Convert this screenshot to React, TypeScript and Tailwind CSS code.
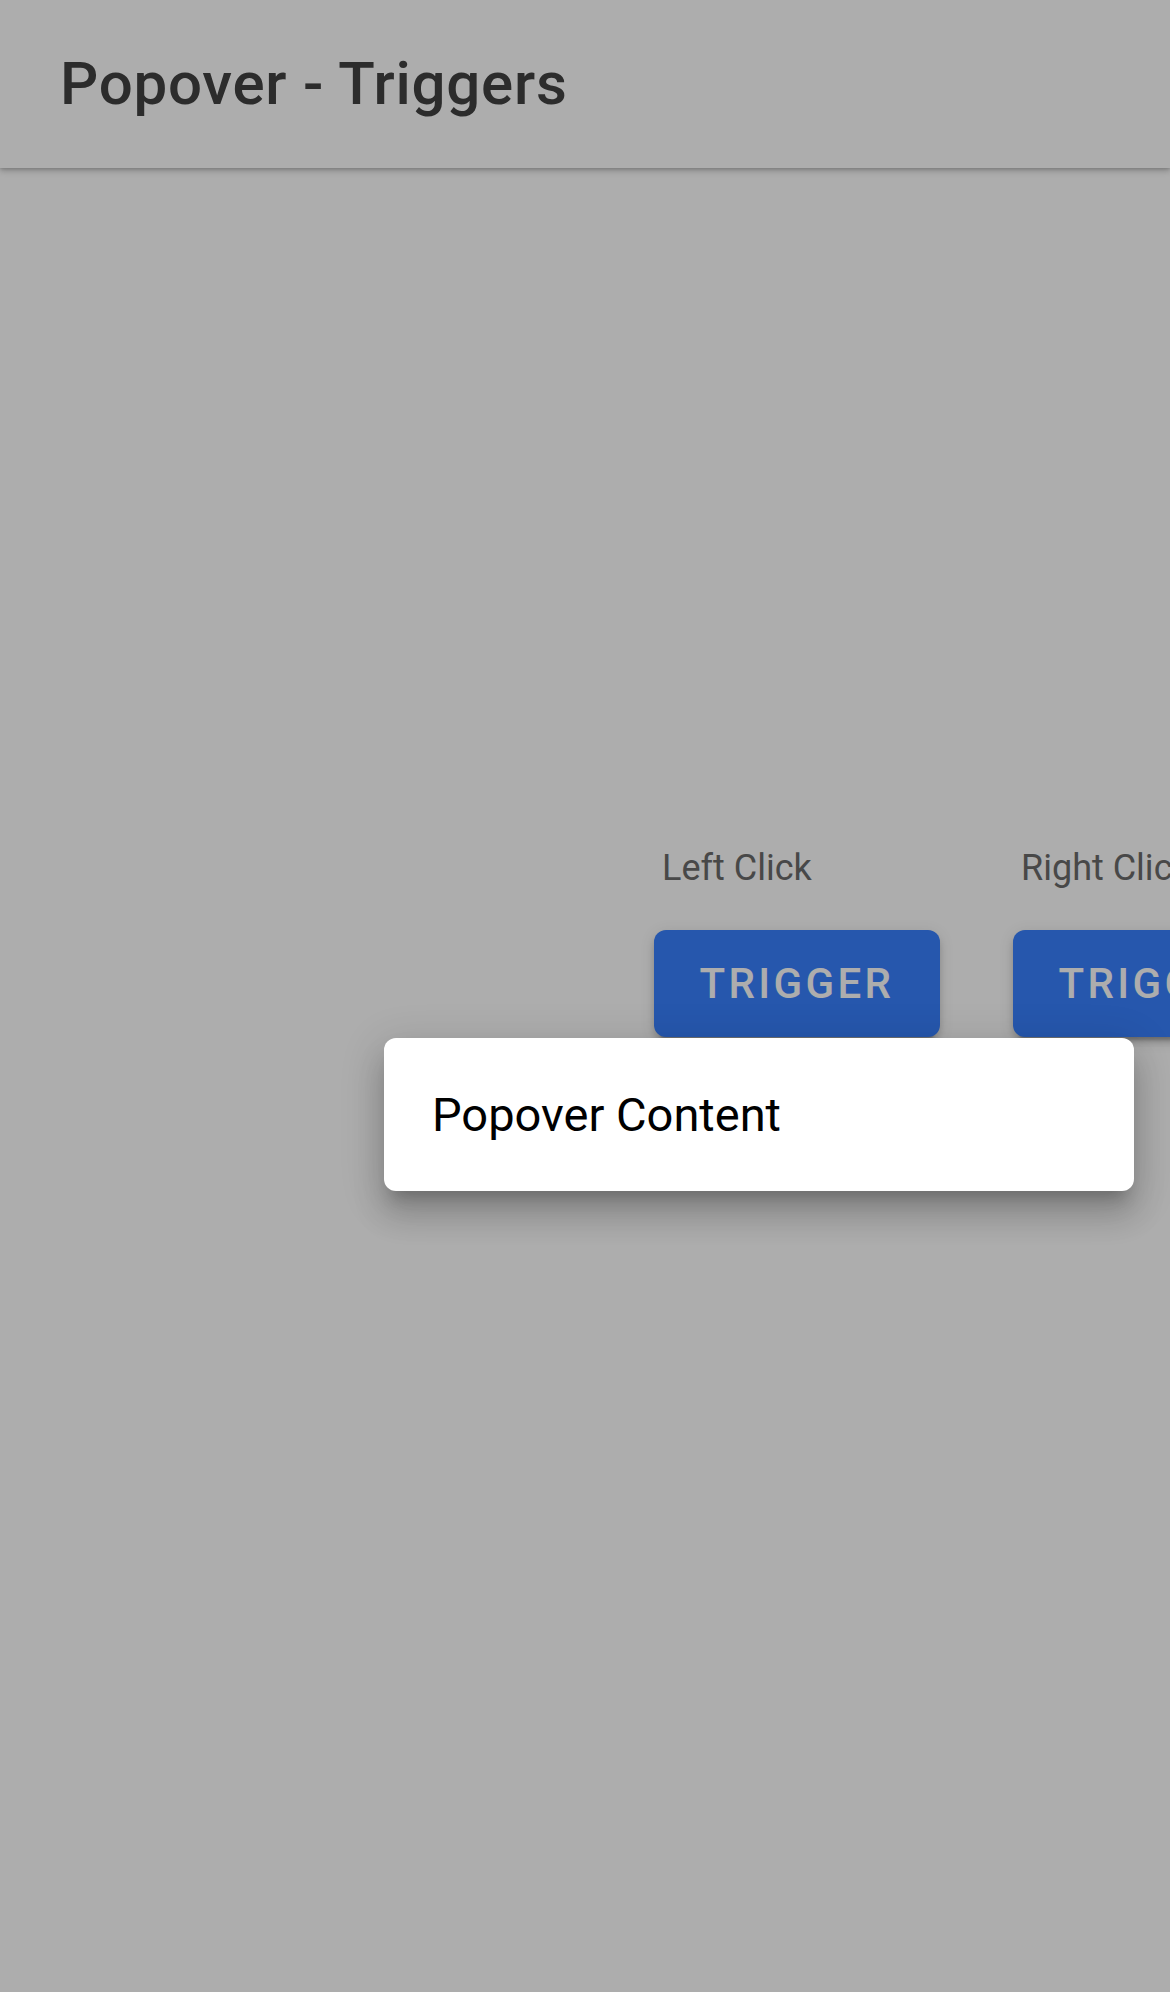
const triggers = ['Left Click', 'Right Click', 'Hover'];

function TriggerColumn({ label }: { label: string }) {
  return (
    <div className="flex flex-col items-start shrink-0 w-[286px]">
      <span className="ml-[8px] text-[36px] leading-[42px] text-[#6b6b6b] whitespace-nowrap">{label}</span>
      <button
        type="button"
        className="mt-[41px] w-[286px] h-[107px] rounded-[12px] bg-[#3880ff] text-white text-[42px] font-medium tracking-[0.08em] uppercase flex items-center justify-center shadow-[0_9px_3px_-6px_rgba(0,0,0,0.2),0_6px_6px_0_rgba(0,0,0,0.14),0_3px_15px_0_rgba(0,0,0,0.12)]"
      >
        Trigger
      </button>
    </div>
  );
}

export default function App() {
  return (
    <div className="relative w-[1170px] h-[1992px] overflow-hidden bg-white font-['Roboto','Noto_Sans',sans-serif]">
      <header className="relative z-10 h-[168px] bg-white flex items-center pl-[60px] shadow-[0_3px_6px_rgba(0,0,0,0.22),0_1px_3px_rgba(0,0,0,0.12)]">
        <h1 className="text-[60px] font-medium tracking-[0.0125em] text-[#424242] leading-none">Popover - Triggers</h1>
      </header>

      <main className="flex flex-nowrap gap-[73px] pl-[654px] pt-[679px]">
        {triggers.map(t => (
          <TriggerColumn key={t} label={t} />
        ))}
      </main>

      {/* backdrop */}
      <div className="absolute inset-0 z-20 bg-black/[0.32]" />

      <div className="absolute z-30 left-[384px] top-[1038px] w-[750px] rounded-[12px] bg-white p-[48px] shadow-[0_15px_15px_-9px_rgba(0,0,0,0.2),0_24px_30px_3px_rgba(0,0,0,0.14),0_9px_42px_6px_rgba(0,0,0,0.12)]">
        <p className="text-[47px] leading-[57px] text-black">Popover Content</p>
      </div>
    </div>
  );
}
